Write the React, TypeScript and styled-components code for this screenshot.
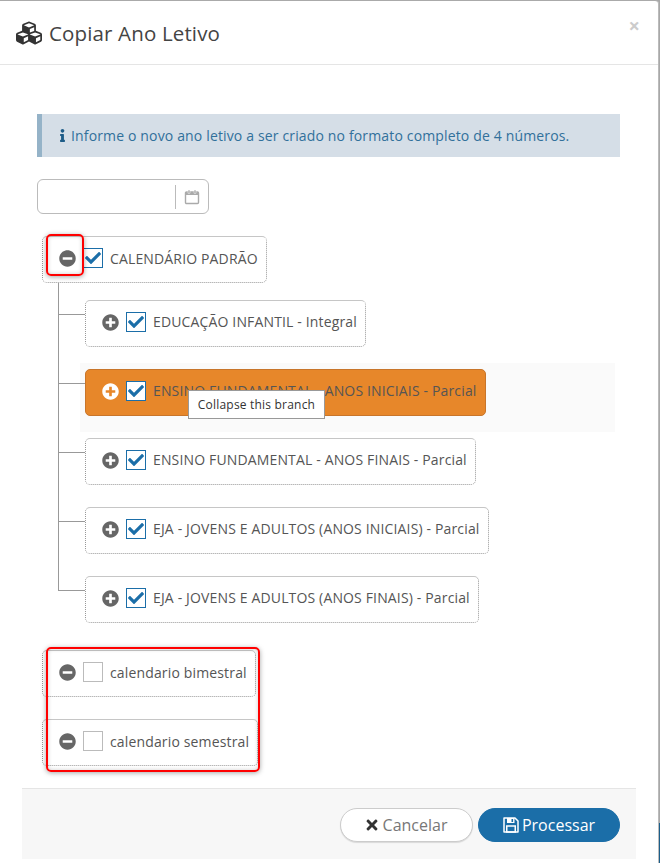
import styled, { createGlobalStyle } from 'styled-components'
import { FaCubes, FaInfo, FaMinusCircle, FaPlusCircle, FaCheck, FaTimes } from 'react-icons/fa'

const GlobalStyle = createGlobalStyle`
  html, body {
    margin: 0;
    padding: 0;
    background: #fff;
  }
  body {
    font-family: 'Open Sans', 'Liberation Sans', sans-serif;
    font-size: 14px;
    letter-spacing: 0.15px;
    color: #555;
  }
`

const Page = styled.div`
  position: relative;
  width: 660px;
  height: 863px;
  overflow: hidden;
  background: linear-gradient(#a8a8a8 823px, #1b5e8a 823px);
`

const Modal = styled.div`
  width: 658px;
  height: 863px;
  border-top: 1px solid #aaa;
  border-right: 1px solid #bbb;
  border-top-right-radius: 4px;
  background: #fff;
`

const Header = styled.header`
  display: flex;
  align-items: center;
  gap: 7px;
  height: 63px;
  padding: 0 18px 0 16px;
  border-bottom: 1px solid #e5e5e5;
`

const Title = styled.h4`
  flex: 1;
  margin: 0;
  font-size: 20.5px;
  font-weight: 400;
  color: #444;
`

const Close = styled.span`
  margin-top: -13px;
  font-size: 20px;
  font-weight: 700;
  line-height: 1;
  color: #ccc;
`

const Body = styled.div`
  box-sizing: border-box;
  height: 723px;
  padding: 49px 38px 0 37px;
`

const Alert = styled.div`
  display: flex;
  align-items: center;
  gap: 2px;
  height: 43px;
  padding-left: 14px;
  border-left: 5px solid #95b3c8;
  background: #d5dee7;
  color: #31709b;
  svg {
    color: #1d5c88;
  }
`

const DateField = styled.div`
  display: flex;
  align-items: center;
  box-sizing: border-box;
  width: 172px;
  height: 35px;
  margin-top: 22px;
  border: 1px solid #bbb;
  border-radius: 6px;
`

const DateInput = styled.div`
  flex: 1;
  height: 24px;
  border-right: 1px solid #bbb;
`

const DateAddon = styled.span`
  display: flex;
  justify-content: center;
  width: 32px;
`

const Tree = styled.ul`
  margin: 16px 0 0;
  padding: 0;
  list-style: none;
`

const RootItem = styled.li<{ $expanded?: boolean }>`
  padding: 6px 0 ${p => (p.$expanded ? 5 : 16)}px 5px;
`

const Branches = styled.ul`
  margin: 11px 0 0 16px;
  padding: 0;
  list-style: none;
`

const BranchRow = styled.li`
  display: flex;
`

const Connector = styled.div`
  position: relative;
  z-index: 1;
  display: flex;
  flex-direction: column;
  flex: none;
  width: 27px;
  margin-right: -5px;
`

const Elbow = styled.div<{ $first?: boolean }>`
  box-sizing: border-box;
  height: ${p => (p.$first ? 32 : 21)}px;
  margin-top: ${p => (p.$first ? -11 : 0)}px;
  border-left: 1px solid #999;
  border-bottom: 1px solid #999;
`

const Stem = styled.div<{ $last?: boolean }>`
  flex: 1;
  border-left: ${p => (p.$last ? 'none' : '1px solid #999')};
`

const BranchBody = styled.div<{ $active?: boolean }>`
  width: 535px;
  box-sizing: border-box;
  padding: 6px 5px 16px;
  background: ${p => (p.$active ? '#fafafa' : 'transparent')};
`

const Node = styled.div<{ $active?: boolean }>`
  position: relative;
  display: inline-flex;
  align-items: center;
  box-sizing: border-box;
  height: 47px;
  padding: 0 8px 3px 16px;
  border: 1px ${p => (p.$active ? 'solid #c8752a' : 'dotted #999')};
  border-top: 1px solid ${p => (p.$active ? '#c8752a' : '#c6c6c6')};
  border-radius: 5px;
  background: ${p => (p.$active ? '#e7872a' : '#fff')};
  line-height: 20px;
  white-space: nowrap;
`

const Toggle = styled.span<{ $active?: boolean }>`
  display: flex;
  margin-right: 7px;
  font-size: 17px;
  color: ${p => (p.$active ? '#fff' : '#666')};
`

const Check = styled.span<{ $checked?: boolean }>`
  display: flex;
  align-items: center;
  justify-content: center;
  box-sizing: border-box;
  width: 20px;
  height: 20px;
  margin-right: 7px;
  border: 1px solid ${p => (p.$checked ? '#1b6ea8' : '#bbb')};
  background: #fff;
  color: #1b6ea8;
  font-size: 16px;
`

const RootLabel = styled.span`
  margin-top: 2px;
`

const Tooltip = styled.div`
  position: absolute;
  top: 20px;
  left: 102px;
  box-sizing: border-box;
  width: 137px;
  height: 29px;
  padding-top: 5px;
  border: 1px solid #999;
  background: #fff;
  color: #333;
  font-size: 12px;
  letter-spacing: 0.2px;
  line-height: 17px;
  text-align: center;
`

const Footer = styled.footer`
  display: flex;
  justify-content: flex-end;
  gap: 5px;
  box-sizing: border-box;
  height: 71px;
  margin: 0 22px;
  padding: 19px 16px 0 0;
  border-top: 1px solid #e5e5e5;
  background: #f7f7f7;
`

const Button = styled.button<{ $primary?: boolean }>`
  display: inline-flex;
  align-items: center;
  justify-content: center;
  gap: 3px;
  width: ${p => (p.$primary ? 142 : 133)}px;
  height: 34px;
  padding: 0 ${p => (p.$primary ? 0 : 2)}px 0 0;
  border: 1px solid ${p => (p.$primary ? '#1b6ea8' : '#ccc')};
  border-radius: 17px;
  background: ${p => (p.$primary ? '#1b6ea8' : '#fff')};
  box-shadow: ${p => (p.$primary ? 'none' : '0 1px 1px rgba(0, 0, 0, 0.12)')};
  color: ${p => (p.$primary ? '#fff' : '#777')};
  font-family: inherit;
  font-size: 16px;
  svg {
    color: ${p => (p.$primary ? '#fff' : '#333')};
    font-size: 16px;
  }
`

const Annotation = styled.div`
  position: absolute;
  box-sizing: border-box;
  border: 2px solid #f00;
  border-radius: 5px;
  box-shadow: 0 1px 5px rgba(0, 0, 0, 0.35), inset 0 0 4px rgba(0, 0, 0, 0.2);
  pointer-events: none;
`

const branches = [
  { label: 'EDUCAÇÃO INFANTIL - Integral' },
  { label: 'ENSINO FUNDAMENTAL - ANOS INICIAIS - Parcial', active: true },
  { label: 'ENSINO FUNDAMENTAL - ANOS FINAIS - Parcial' },
  { label: 'EJA - JOVENS E ADULTOS (ANOS INICIAIS) - Parcial' },
  { label: 'EJA - JOVENS E ADULTOS (ANOS FINAIS) - Parcial' }
]

function CalendarIcon () {
  return (
    <svg width='16' height='16' viewBox='0 0 16 16' fill='none'>
      <rect x='1.5' y='3' width='13' height='11.5' rx='1' stroke='#aaa' strokeWidth='1.4' />
      <rect x='1.5' y='3' width='13' height='3' fill='#aaa' />
      <rect x='4' y='1' width='2' height='3.5' rx='0.6' fill='#aaa' stroke='#fff' strokeWidth='0.5' />
      <rect x='10' y='1' width='2' height='3.5' rx='0.6' fill='#aaa' stroke='#fff' strokeWidth='0.5' />
    </svg>
  )
}

function SaveIcon () {
  return (
    <svg width='16' height='16' viewBox='0 0 16 16' fill='none'>
      <path d='M1 1h11l3 3v11H1z' stroke='currentColor' strokeWidth='1.5' strokeLinejoin='round' />
      <path d='M4 1h7.5v5H4z' fill='currentColor' />
      <rect x='8.5' y='2' width='1.6' height='3' fill='#1b6ea8' />
      <rect x='3.75' y='9' width='8.5' height='6' stroke='currentColor' strokeWidth='1.5' />
    </svg>
  )
}

function App () {
  return (
    <Page>
      <GlobalStyle />
      <Modal>
        <Header>
          <FaCubes size={26} color='#333' />
          <Title>Copiar Ano Letivo</Title>
          <Close>×</Close>
        </Header>
        <Body>
          <Alert>
            <FaInfo size={13} />
            Informe o novo ano letivo a ser criado no formato completo de 4 números.
          </Alert>
          <DateField>
            <DateInput />
            <DateAddon><CalendarIcon /></DateAddon>
          </DateField>
          <Tree>
            <RootItem $expanded>
              <Node>
                <Toggle><FaMinusCircle /></Toggle>
                <Check $checked><FaCheck /></Check>
                <RootLabel>CALENDÁRIO PADRÃO</RootLabel>
              </Node>
              <Branches>
                {branches.map((branch, index) => (
                  <BranchRow key={branch.label}>
                    <Connector>
                      <Elbow $first={index === 0} />
                      <Stem $last={index === branches.length - 1} />
                    </Connector>
                    <BranchBody $active={branch.active}>
                      <Node $active={branch.active}>
                        <Toggle $active={branch.active}><FaPlusCircle /></Toggle>
                        <Check $checked><FaCheck /></Check>
                        {branch.label}
                        {branch.active && <Tooltip>Collapse this branch</Tooltip>}
                      </Node>
                    </BranchBody>
                  </BranchRow>
                ))}
              </Branches>
            </RootItem>
            <RootItem>
              <Node>
                <Toggle><FaMinusCircle /></Toggle>
                <Check />
                <RootLabel>calendario bimestral</RootLabel>
              </Node>
            </RootItem>
            <RootItem>
              <Node>
                <Toggle><FaMinusCircle /></Toggle>
                <Check />
                <RootLabel>calendario semestral</RootLabel>
              </Node>
            </RootItem>
          </Tree>
        </Body>
        <Footer>
          <Button><FaTimes />Cancelar</Button>
          <Button $primary><SaveIcon />Processar</Button>
        </Footer>
      </Modal>
      <Annotation style={{ left: 46, top: 234, width: 38, height: 42 }} />
      <Annotation style={{ left: 46, top: 647, width: 214, height: 125 }} />
    </Page>
  )
}

export default App
